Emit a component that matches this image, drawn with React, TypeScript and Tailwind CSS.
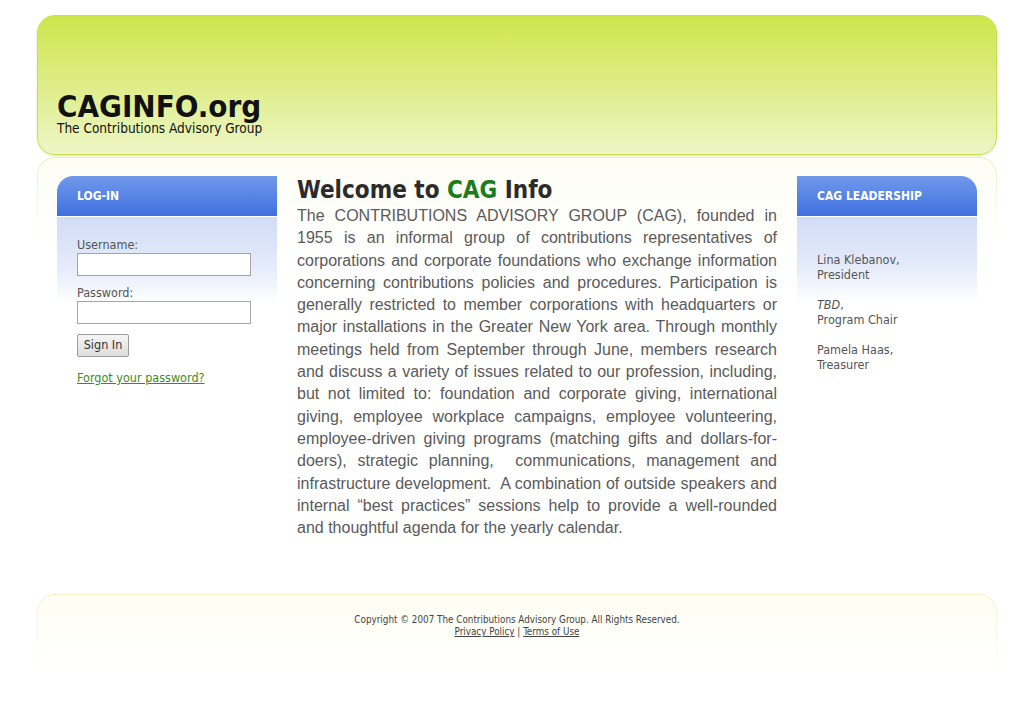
import React from "react";

const tahoma = { fontFamily: "'DejaVu Sans Condensed','DejaVu Sans',sans-serif" };

export default function App() {
  return (
    <div className="min-h-[704px] bg-white">
      <div className="ml-[37px] w-[960px] pt-[15px]">
        {/* Header */}
        <div
          className="flex h-[140px] flex-col justify-end rounded-[18px] border border-[#c9df4c] bg-[linear-gradient(to_bottom,#cde64b_0%,#dcec82_45%,#eef6c6_100%)] pb-[19px] pl-[19px] shadow-[0_1px_2px_rgba(190,210,80,0.5)]"
          style={tahoma}
        >
          <div className="text-[31px] font-bold leading-[30px] text-[#111] [font-stretch:condensed]">CAGINFO.org</div>
          <div className="text-[13.5px] leading-[14px] text-[#111] [font-stretch:condensed]">The Contributions Advisory Group</div>
        </div>

        {/* Content panel */}
        <div className="mt-[2px] rounded-t-[18px] bg-[linear-gradient(to_bottom,#e9f0c2_0px,#f6f9e2_40px,#ffffff_90px)] px-px pt-px">
          <div className="flex gap-[20px] rounded-t-[17px] bg-[linear-gradient(to_bottom,#fdfdf4_0px,#ffffff_90px)] px-[19px] pb-[53px] pt-[18px]">
            {/* Left sidebar */}
            <div className="w-[220px] shrink-0" style={tahoma}>
              <div className="flex h-[40px] items-center rounded-tl-[16px] bg-[linear-gradient(to_bottom,#7199eb,#3e70e0)] pl-[20px] text-[12px] font-bold text-white [font-stretch:condensed]">
                LOG-IN
              </div>
              <div className="mt-px bg-[linear-gradient(to_bottom,#d1ddf7_0px,#e4ebfa_50px,#ffffff_86px)] px-[20px] pt-[20px] text-[12.5px] text-[#555] [font-stretch:condensed]">
                <div className="leading-[16px]">Username:</div>
                <input className="block h-[23px] w-[174px] border border-[#a5a5a5] bg-white" />
                <div className="mt-[9px] leading-[16px]">Password:</div>
                <input type="password" className="block h-[23px] w-[174px] border border-[#a5a5a5] bg-white" />
                <button className="mt-[10px] block h-[23px] w-[52px] rounded-[2px] border border-[#9c9c9c] bg-[linear-gradient(to_bottom,#f6f6f6,#dcdcdc)] text-[12.5px] text-[#333]">
                  Sign In
                </button>
                <a href="#" className="mt-[13px] block text-[12.5px] leading-[16px] text-[#3d8c1c] underline">
                  Forgot your password?
                </a>
              </div>
            </div>

            {/* Main */}
            <div className="w-[480px] shrink-0">
              <h1
                className="text-[24px] font-bold leading-[29px] text-[#2b2b2b] [font-stretch:condensed]"
                style={tahoma}
              >
                Welcome to <span className="text-[#1c7c1c]">CAG</span> Info
              </h1>
              <p
                className="text-justify text-[16px] leading-[22.3px] text-[#5a5a5a]"
                style={{ fontFamily: "'Liberation Sans',Arial,sans-serif" }}
              >
                The CONTRIBUTIONS ADVISORY GROUP (CAG), founded in 1955 is an informal group of contributions
                representatives of corporations and corporate foundations who exchange information concerning
                contributions policies and procedures. Participation is generally restricted to member corporations
                with headquarters or major installations in the Greater New York area. Through monthly meetings held
                from September through June, members research and discuss a variety of issues related to our
                profession, including, but not limited to: foundation and corporate giving, international giving,
                employee workplace campaigns, employee volunteering, employee-driven giving programs (matching gifts
                and dollars-for-doers), strategic planning,{"\u00a0"} communications, management and infrastructure
                development.{"\u00a0"} A combination of outside speakers and internal “best practices” sessions help to
                provide a well-rounded and thoughtful agenda for the yearly calendar.
              </p>
            </div>

            {/* Right sidebar */}
            <div className="w-[180px] shrink-0" style={tahoma}>
              <div className="flex h-[40px] items-center rounded-tr-[16px] bg-[linear-gradient(to_bottom,#7199eb,#3e70e0)] pl-[20px] text-[12px] font-bold text-white [font-stretch:condensed]">
                CAG LEADERSHIP
              </div>
              <div className="mt-px bg-[linear-gradient(to_bottom,#d1ddf7_0px,#e4ebfa_50px,#ffffff_86px)] px-[20px] pt-[35px] text-[12.5px] leading-[15px] text-[#555] [font-stretch:condensed]">
                <div>
                  Lina Klebanov,
                  <br />
                  President
                </div>
                <div className="mt-[15px]">
                  <i>TBD</i>,
                  <br />
                  Program Chair
                </div>
                <div className="mt-[15px]">
                  Pamela Haas,
                  <br />
                  Treasurer
                </div>
              </div>
            </div>
          </div>
        </div>

        {/* Footer */}
        <div className="mt-[2px] rounded-t-[18px] bg-[linear-gradient(to_bottom,#f1f4cc_0px,#f8faea_40px,#ffffff_85px)] px-px pt-px">
          <div
            className="h-[80px] rounded-t-[17px] bg-[linear-gradient(to_bottom,#fefef3_0px,#ffffff_80px)] pt-[19px] text-center text-[9.8px] leading-[12px] text-[#444] [font-stretch:condensed]"
            style={tahoma}
          >
            <div>Copyright © 2007 The Contributions Advisory Group. All Rights Reserved.</div>
            <div>
              <a href="#" className="underline">Privacy Policy</a> | <a href="#" className="underline">Terms of Use</a>
            </div>
          </div>
        </div>
      </div>
    </div>
  );
}
